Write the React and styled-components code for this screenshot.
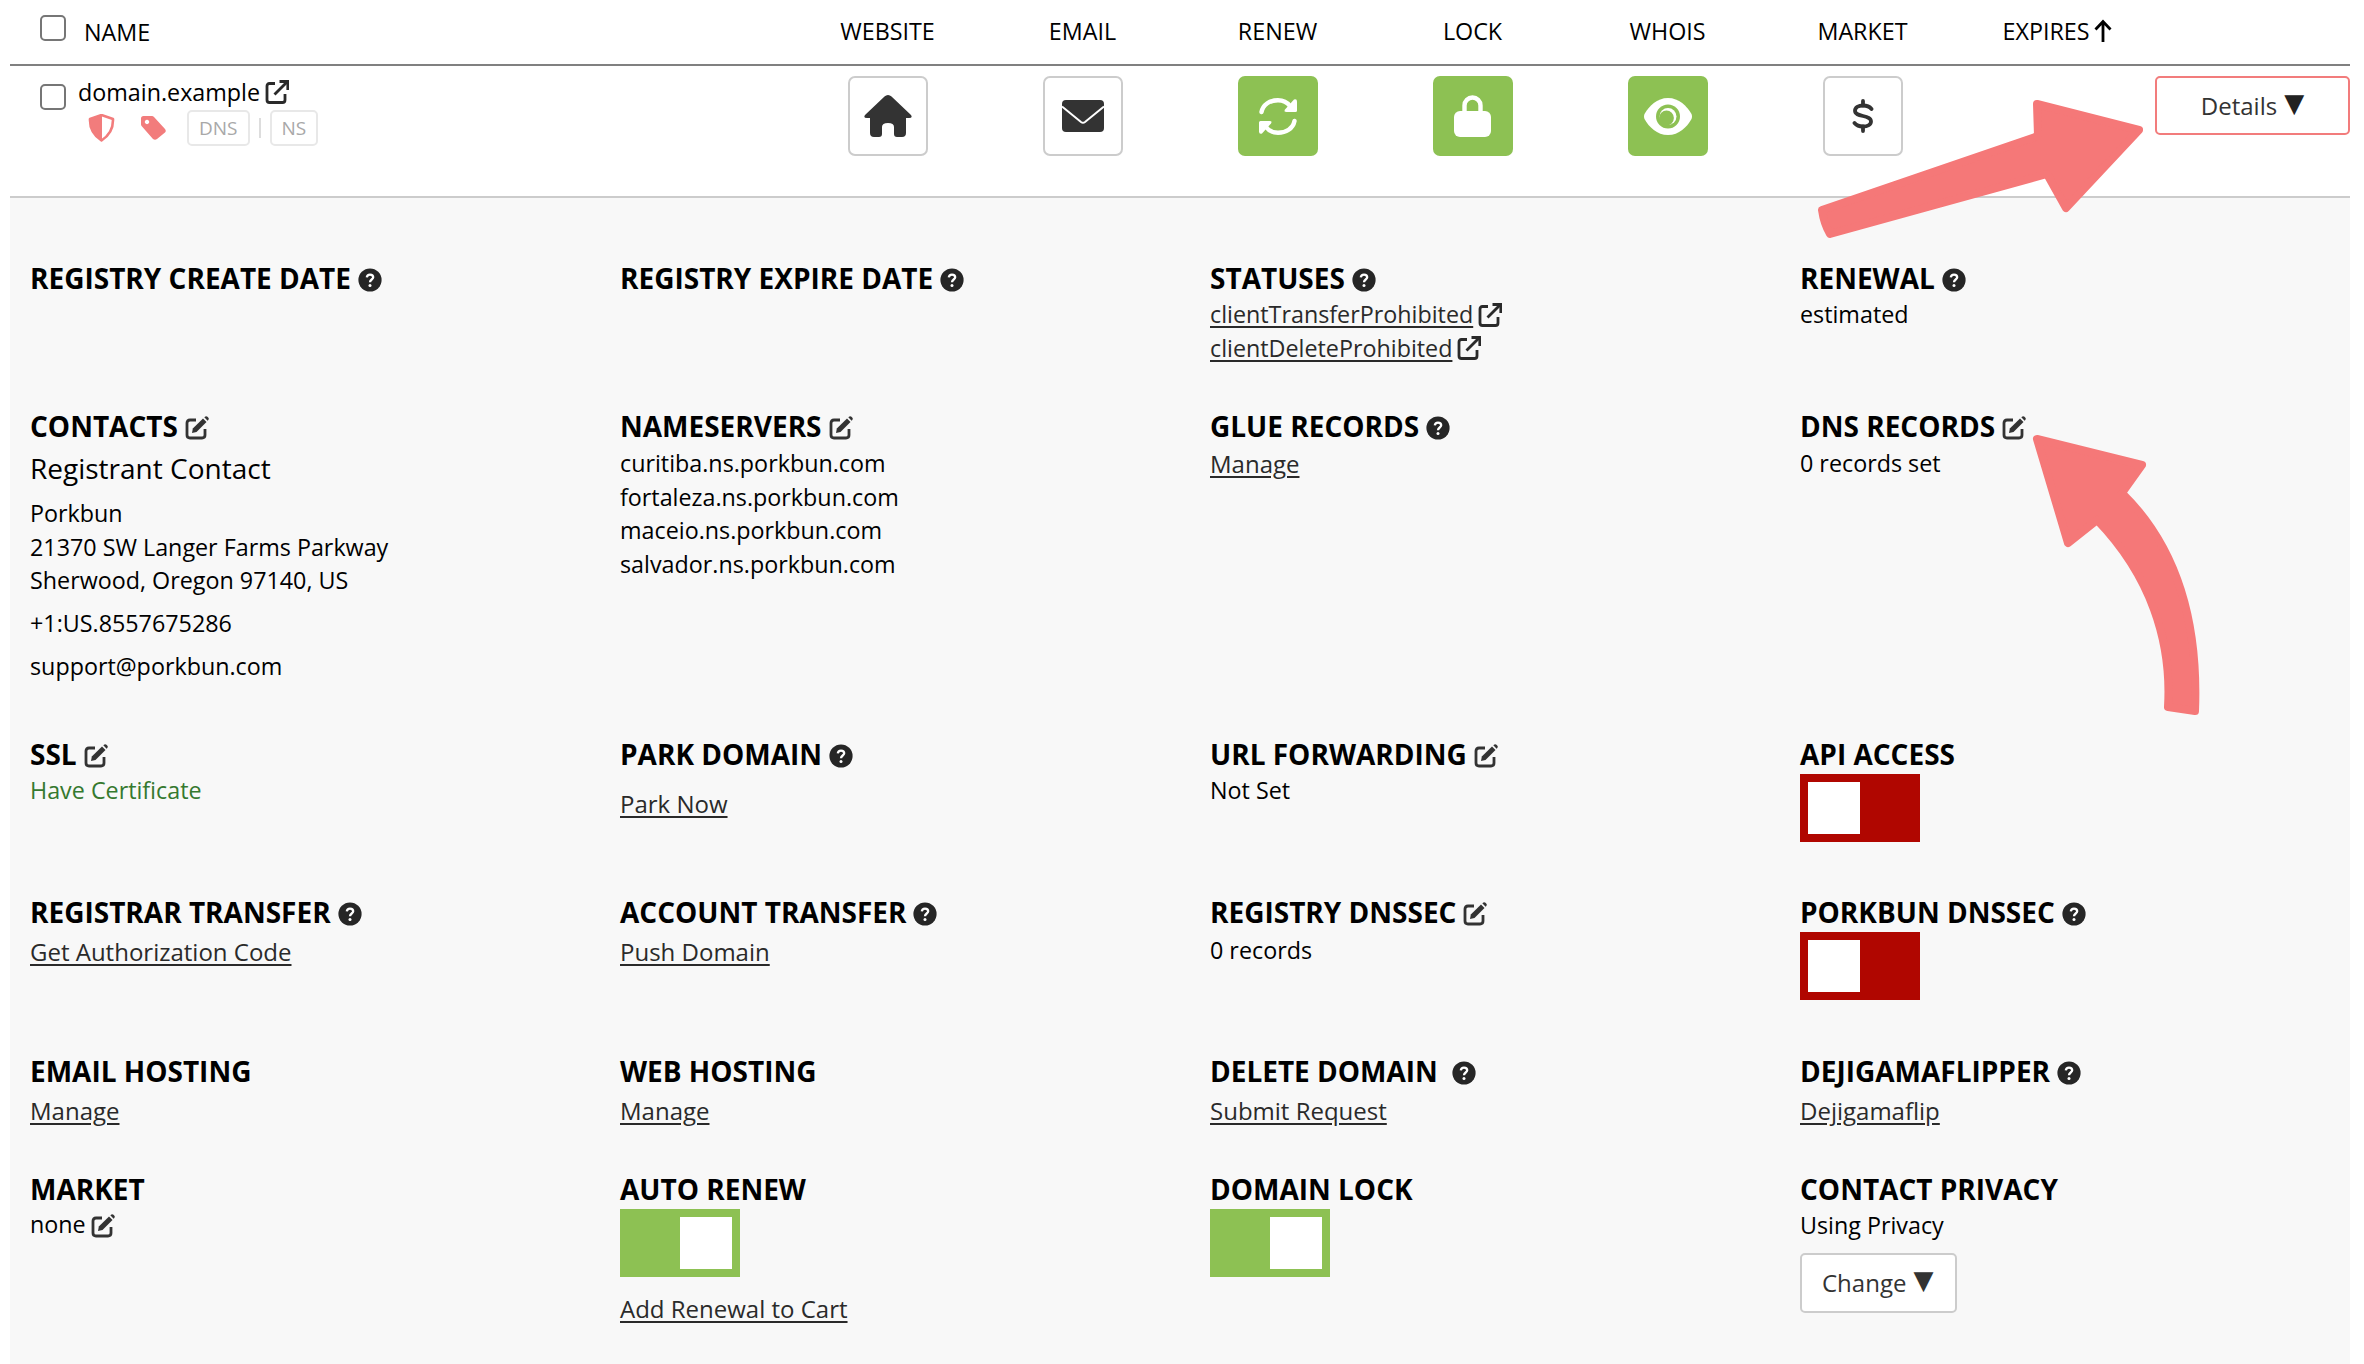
import React from "react";
import styled, { createGlobalStyle } from "styled-components";

const GlobalStyle = createGlobalStyle`
  html, body {
    margin: 0;
    padding: 0;
    background: #ffffff;
    overflow: hidden;
  }
  body {
    font-family: "Open Sans", "Liberation Sans", sans-serif;
    color: #000000;
  }
`;

const Page = styled.div`
  position: relative;
  width: 2364px;
  height: 1364px;
  padding: 0 14px 0 10px;
  box-sizing: border-box;
`;

const tableColumns = "780px repeat(8, 195px)";

const HeaderRow = styled.div`
  display: grid;
  grid-template-columns: ${tableColumns};
  height: 64px;
  border-bottom: 2px solid #808080;
  align-items: center;
  font-size: 23.3px;
`;

const NameHeader = styled.div`
  display: flex;
  align-items: flex-start;
  gap: 18px;
  padding-left: 30px;
  height: 64px;
  box-sizing: border-box;
  padding-top: 15px;

  span {
    line-height: 34px;
  }
`;

const Check = styled.span`
  display: block;
  width: 26px;
  height: 26px;
  flex: none;
  box-sizing: border-box;
  border: 2px solid #767676;
  border-radius: 5px;
  background: #ffffff;
`;

const HeadCell = styled.div`
  text-align: center;
  display: flex;
  justify-content: center;
  align-items: center;
  gap: 3px;
  margin-top: -2px;
`;

const DomainRow = styled.div`
  display: grid;
  grid-template-columns: ${tableColumns};
  border-bottom: 2px solid #cccccc;
  padding-top: 10px;
  box-sizing: border-box;
  height: 132px;
`;

const NameCell = styled.div`
  display: flex;
  gap: 12px;
  padding: 8px 0 0 30px;
`;

const NameStack = styled.div`
  display: flex;
  flex-direction: column;
`;

const DomainName = styled.div`
  display: flex;
  align-items: center;
  gap: 5px;
  font-size: 23.3px;
  line-height: 34px;
  margin-top: -9px;
`;

const Badges = styled.div`
  display: flex;
  align-items: center;
  margin: 1px 0 0 10px;
`;

const BadgeGap = styled.span`
  width: ${(p) => p.$w}px;
`;

const SmallTag = styled.span`
  display: inline-block;
  box-sizing: border-box;
  height: 36px;
  line-height: 32px;
  padding: 0 10px;
  border: 2px solid #e8e8e8;
  border-radius: 5px;
  font-size: 19px;
  color: #a8a8a8;
`;

const Separator = styled.span`
  width: 2px;
  height: 20px;
  margin: 0 9px;
  background: #dddddd;
`;

const IconCell = styled.div`
  display: flex;
  justify-content: center;
`;

const IconButton = styled.div`
  width: 80px;
  height: 80px;
  box-sizing: border-box;
  display: flex;
  align-items: center;
  justify-content: center;
  border-radius: 7px;
  border: ${(p) => (p.$on ? "none" : "2px solid #cccccc")};
  background: ${(p) => (p.$on ? "#8dc153" : "#ffffff")};
  color: ${(p) => (p.$on ? "#ffffff" : "#333333")};
`;

const DetailsButton = styled.div`
  height: 59px;
  box-sizing: border-box;
  border: 2px solid #f27c7c;
  border-radius: 5px;
  display: flex;
  align-items: center;
  justify-content: center;
  gap: 7px;
  font-size: 24px;
  color: #333333;
  background: #ffffff;
`;

const DetailGrid = styled.div`
  display: grid;
  grid-template-columns: repeat(4, 590px);
  grid-template-rows: 148px 328px 158px 159px 118px auto;
  height: 1166px;
  box-sizing: border-box;
  padding: 63px 0 0 20px;
  background: #f8f8f8;
  font-size: 23.3px;
  line-height: 33.5px;
`;

const Cell = styled.div`
  min-width: 0;
`;

const Heading = styled.div`
  display: flex;
  align-items: center;
  gap: ${(p) => p.$gap || 7}px;
  height: 36px;
  font-size: 28px;
  font-weight: 700;
  color: #000000;
  white-space: nowrap;
`;

const IconWrap = styled.span`
  display: inline-flex;
  margin-top: ${(p) => p.$dy || 0}px;
`;

const Value = styled.div`
  margin-top: ${(p) => p.$top || 0}px;
  color: ${(p) => p.$color || "#000000"};
  display: flex;
  align-items: center;
  gap: 5px;
`;

const StyledLink = styled.a`
  color: #2a2a2a;
  font-size: ${(p) => (p.$small ? "23.3px" : "24px")};
  text-decoration: underline;
  text-underline-offset: 3px;
`;

const RegistrantTitle = styled.div`
  font-size: 28px;
  line-height: 40px;
  margin-top: 3px;
`;

const ContactBlock = styled.div`
  margin-top: ${(p) => p.$top || 0}px;
`;

const Toggle = styled.div`
  width: 120px;
  height: 68px;
  box-sizing: border-box;
  padding: 8px;
  margin-top: 1px;
  display: flex;
  justify-content: ${(p) => (p.$on ? "flex-end" : "flex-start")};
  background: ${(p) => (p.$on ? "#8dc153" : "#b00600")};
`;

const Knob = styled.span`
  display: block;
  width: 52px;
  height: 52px;
  background: #ffffff;
`;

const ChangeButton = styled.div`
  display: inline-flex;
  align-items: center;
  gap: 7px;
  height: 60px;
  box-sizing: border-box;
  margin-top: 10px;
  padding: 0 20px;
  width: 157px;
  background: #ffffff;
  border: 2px solid #cccccc;
  border-radius: 5px;
  font-size: 24px;
  color: #333333;
`;

const Caret = styled.span`
  font-family: "DejaVu Sans", sans-serif;
  font-size: 26px;
  line-height: 1;
  color: ${(p) => p.$color || "#333333"};
  margin-top: -6px;
`;

const ArrowLayer = styled.svg`
  position: absolute;
  top: 0;
  left: 0;
  pointer-events: none;
`;

const Help = () => (
  <IconWrap $dy={2}>
    <svg width="24" height="24" viewBox="0 0 24 24">
      <circle cx="12" cy="12" r="11.6" fill="#262626" />
      <path d="M8.8 9.4C9 7.6 10.3 6.6 12 6.6C13.9 6.6 15.2 7.8 15.2 9.3C15.2 11.5 12 11.6 12 14.2" fill="none" stroke="#ffffff" strokeWidth="2.3" />
      <circle cx="12" cy="17.4" r="1.5" fill="#ffffff" />
    </svg>
  </IconWrap>
);

const Edit = () => (
  <IconWrap $dy={2}>
    <svg width="24" height="24" viewBox="0 0 24 24">
      <path d="M11 4H5Q2 4 2 7V19Q2 22 5 22H17Q20 22 20 19V13" fill="none" stroke="#333333" strokeWidth="2.8" />
      <path d="M7 17L7.8 12.5L18 2.5L21.5 6L11.5 16Z" fill="#333333" />
      <path d="M19.3 1.3L20.4 .4Q21.5 -.2 22.5 .8L23.4 1.8Q24.2 2.9 23.3 3.9L22.6 4.7Z" fill="#333333" />
    </svg>
  </IconWrap>
);

const External = () => (
  <IconWrap>
    <svg width="24" height="24" viewBox="0 0 24 24" fill="none" stroke="#2a2a2a" strokeWidth="2.8">
      <path d="M10 3.5H4.5Q2 3.5 2 6V20Q2 22.5 4.5 22.5H17.5Q20 22.5 20 20V14" />
      <path d="M9.5 14.5L21.5 2.5" />
      <path d="M14.5 1.5H22.8V10" />
    </svg>
  </IconWrap>
);

const HomeIcon = () => (
  <svg width="48" height="42" viewBox="0 0 48 42" fill="#333333">
    <path d="M24 0Q22 0 20.5 1.5L1 20Q-1 23 3 23L6 23L6 38Q6 42 10 42L15 42Q18 42 18 39L18 32Q18 28 24 28Q30 28 30 32L30 39Q30 42 33 42L38 42Q42 42 42 38L42 23L45 23Q49 23 47 20L27.5 1.5Q26 0 24 0Z" />
  </svg>
);

const MailIcon = () => (
  <svg width="42" height="32" viewBox="0 0 42 32">
    <rect width="42" height="32" rx="4" fill="#333333" />
    <path d="M0 6.5L19 22Q21 23.5 23 22L42 6.5" fill="none" stroke="#ffffff" strokeWidth="2" />
  </svg>
);

const SyncIcon = () => (
  <svg width="40" height="37" viewBox="0 0 40 37" fill="#ffffff">
    <path d="M3.5 14C5 6.5 12 2.2 20 2.2C25 2.2 29 4 32 8" fill="none" stroke="#ffffff" strokeWidth="4.4" strokeLinecap="round" />
    <path d="M36 1.5Q39 .5 39 3.5V12.5Q39 14 37.5 14H28.5Q25.5 14 27 11.5Z" />
    <path d="M36.5 23C35 30.5 28 34.8 20 34.8C15 34.8 11 33 8 29" fill="none" stroke="#ffffff" strokeWidth="4.4" strokeLinecap="round" />
    <path d="M4 35.5Q1 36.5 1 33.5V24.5Q1 23 2.5 23H11.5Q14.5 23 13 25.5Z" />
  </svg>
);

const LockIcon = () => (
  <svg width="37" height="42" viewBox="0 0 37 42" fill="#ffffff">
    <path d="M10.5 18V10.5a8 8 0 0 1 16 0V18" fill="none" stroke="#ffffff" strokeWidth="4.4" />
    <rect y="16" width="37" height="26" rx="6" />
  </svg>
);

const EyeIcon = () => (
  <svg width="48" height="37" viewBox="0 0 48 37">
    <path d="M24 0C35 0 43 8 47.5 16Q48.5 18.5 47.5 21C43 29 35 37 24 37C13 37 5 29 .5 21Q-.5 18.5 .5 16C5 8 13 0 24 0Z" fill="#ffffff" />
    <circle cx="24" cy="18.5" r="12" fill="#8dc153" />
    <circle cx="24" cy="18.5" r="8.5" fill="#ffffff" />
    <circle cx="22.5" cy="20" r="7.4" fill="#8dc153" />
  </svg>
);

const DollarIcon = () => (
  <svg width="22" height="34" viewBox="0 0 22 34" fill="none" stroke="#333333" strokeWidth="3.8" strokeLinecap="round">
    <path d="M19.5 10C17.5 7.5 14.5 6.5 11 6.5C6.5 6.5 3 8.5 3 11.8C3 15 6.5 16 11 17C15.5 18 19 19 19 22.5C19 25.5 15.5 27.5 11 27.5C7.5 27.5 4.5 26.5 2.5 24" />
    <path d="M11 2V6.5M11 27.5V32" />
  </svg>
);

const ShieldIcon = () => (
  <svg width="27" height="28" viewBox="0 0 27 28">
    <path d="M13.5 1L25 5Q25.5 19 13.5 26.5Q1.5 19 2 5Z" fill="none" stroke="#f27c7c" strokeWidth="2.6" strokeLinejoin="round" />
    <path d="M13.5 1L2 5Q1.5 19 13.5 26.5Z" fill="#f27c7c" stroke="#f27c7c" strokeWidth="1" strokeLinejoin="round" />
  </svg>
);

const TagIcon = () => (
  <svg width="25" height="24" viewBox="0 0 25 24">
    <path
      fillRule="evenodd"
      fill="#f27c7c"
      d="M2.5 0L11 0Q12 0 13 1L24 13Q25.5 15 24 16.5L16 23Q14 24.5 12 23L1 10.5Q0 9.5 0 8.5L0 2.5Q0 0 2.5 0ZM6 3.8a2.2 2.2 0 1 0 .01 0Z"
    />
  </svg>
);

const headers = ["WEBSITE", "EMAIL", "RENEW", "LOCK", "WHOIS", "MARKET"];

export default function App() {
  return (
    <Page>
      <GlobalStyle />
      <HeaderRow>
        <NameHeader>
          <Check />
          <span>NAME</span>
        </NameHeader>
        {headers.map((h) => (
          <HeadCell key={h}>{h}</HeadCell>
        ))}
        <HeadCell>
          EXPIRES
          <svg width="20" height="24" viewBox="0 0 20 24" fill="none" stroke="#000000" strokeWidth="2.8">
            <path d="M10 23V3M2.5 10.5L10 2.5L17.5 10.5" />
          </svg>
        </HeadCell>
        <div />
      </HeaderRow>

      <DomainRow>
        <NameCell>
          <Check />
          <NameStack>
            <DomainName>
              domain.example <External />
            </DomainName>
            <Badges>
              <ShieldIcon />
              <BadgeGap $w={26} />
              <TagIcon />
              <BadgeGap $w={21} />
              <SmallTag>DNS</SmallTag>
              <Separator />
              <SmallTag>NS</SmallTag>
            </Badges>
          </NameStack>
        </NameCell>
        <IconCell>
          <IconButton>
            <HomeIcon />
          </IconButton>
        </IconCell>
        <IconCell>
          <IconButton>
            <MailIcon />
          </IconButton>
        </IconCell>
        <IconCell>
          <IconButton $on>
            <SyncIcon />
          </IconButton>
        </IconCell>
        <IconCell>
          <IconButton $on>
            <LockIcon />
          </IconButton>
        </IconCell>
        <IconCell>
          <IconButton $on>
            <EyeIcon />
          </IconButton>
        </IconCell>
        <IconCell>
          <IconButton>
            <DollarIcon />
          </IconButton>
        </IconCell>
        <div />
        <DetailsButton>
          Details <Caret $color="#222222">▼</Caret>
        </DetailsButton>
      </DomainRow>

      <DetailGrid>
        <Cell>
          <Heading>REGISTRY CREATE DATE <Help /></Heading>
        </Cell>
        <Cell>
          <Heading>REGISTRY EXPIRE DATE <Help /></Heading>
        </Cell>
        <Cell>
          <Heading>STATUSES <Help /></Heading>
          <Value $top={1}>
            <StyledLink $small>clientTransferProhibited</StyledLink> <External />
          </Value>
          <Value>
            <StyledLink $small>clientDeleteProhibited</StyledLink> <External />
          </Value>
        </Cell>
        <Cell>
          <Heading>RENEWAL <Help /></Heading>
          <Value $top={1}>estimated</Value>
        </Cell>

        <Cell>
          <Heading>CONTACTS <Edit /></Heading>
          <RegistrantTitle>Registrant Contact</RegistrantTitle>
          <ContactBlock $top={9}>
            Porkbun
            <br />
            21370 SW Langer Farms Parkway
            <br />
            Sherwood, Oregon 97140, US
          </ContactBlock>
          <ContactBlock $top={9}>+1:US.8557675286</ContactBlock>
          <ContactBlock $top={10}>support@porkbun.com</ContactBlock>
        </Cell>
        <Cell>
          <Heading>NAMESERVERS <Edit /></Heading>
          <ContactBlock $top={2}>
            curitiba.ns.porkbun.com
            <br />
            fortaleza.ns.porkbun.com
            <br />
            maceio.ns.porkbun.com
            <br />
            salvador.ns.porkbun.com
          </ContactBlock>
        </Cell>
        <Cell>
          <Heading>GLUE RECORDS <Help /></Heading>
          <Value $top={2}>
            <StyledLink>Manage</StyledLink>
          </Value>
        </Cell>
        <Cell>
          <Heading>DNS RECORDS <Edit /></Heading>
          <Value $top={2}>0 records set</Value>
        </Cell>

        <Cell>
          <Heading>SSL <Edit /></Heading>
          <Value $top={1} $color="#35792f">Have Certificate</Value>
        </Cell>
        <Cell>
          <Heading>PARK DOMAIN <Help /></Heading>
          <Value $top={14}>
            <StyledLink>Park Now</StyledLink>
          </Value>
        </Cell>
        <Cell>
          <Heading>URL FORWARDING <Edit /></Heading>
          <Value $top={1}>Not Set</Value>
        </Cell>
        <Cell>
          <Heading>API ACCESS</Heading>
          <Toggle>
            <Knob />
          </Toggle>
        </Cell>

        <Cell>
          <Heading>REGISTRAR TRANSFER <Help /></Heading>
          <Value $top={4}>
            <StyledLink>Get Authorization Code</StyledLink>
          </Value>
        </Cell>
        <Cell>
          <Heading>ACCOUNT TRANSFER <Help /></Heading>
          <Value $top={4}>
            <StyledLink>Push Domain</StyledLink>
          </Value>
        </Cell>
        <Cell>
          <Heading>REGISTRY DNSSEC <Edit /></Heading>
          <Value $top={3}>0 records</Value>
        </Cell>
        <Cell>
          <Heading>PORKBUN DNSSEC <Help /></Heading>
          <Toggle>
            <Knob />
          </Toggle>
        </Cell>

        <Cell>
          <Heading>EMAIL HOSTING</Heading>
          <Value $top={4}>
            <StyledLink>Manage</StyledLink>
          </Value>
        </Cell>
        <Cell>
          <Heading>WEB HOSTING</Heading>
          <Value $top={4}>
            <StyledLink>Manage</StyledLink>
          </Value>
        </Cell>
        <Cell>
          <Heading $gap={14}>DELETE DOMAIN <Help /></Heading>
          <Value $top={4}>
            <StyledLink>Submit Request</StyledLink>
          </Value>
        </Cell>
        <Cell>
          <Heading>DEJIGAMAFLIPPER <Help /></Heading>
          <Value $top={4}>
            <StyledLink>Dejigamaflip</StyledLink>
          </Value>
        </Cell>

        <Cell>
          <Heading>MARKET</Heading>
          <Value>
            none <Edit />
          </Value>
        </Cell>
        <Cell>
          <Heading>AUTO RENEW</Heading>
          <Toggle $on>
            <Knob />
          </Toggle>
          <Value $top={15}>
            <StyledLink>Add Renewal to Cart</StyledLink>
          </Value>
        </Cell>
        <Cell>
          <Heading>DOMAIN LOCK</Heading>
          <Toggle $on>
            <Knob />
          </Toggle>
        </Cell>
        <Cell>
          <Heading>CONTACT PRIVACY</Heading>
          <Value $top={1}>Using Privacy</Value>
          <ChangeButton>
            Change <Caret>▼</Caret>
          </ChangeButton>
        </Cell>
      </DetailGrid>

      <ArrowLayer width="2364" height="1364" viewBox="0 0 2364 1364">
        <g fill="#f57878" stroke="#f57878" strokeWidth="8" strokeLinejoin="round">
          <path d="M1822 210L2038 136L2037 104L2139 130L2066 208L2047 174L1830 234Q1824 224 1822 210Z" />
          <path d="M2037 439L2142 465L2122 493C2170 540 2199 610 2195 711L2168 707C2172 640 2150 575 2097 520L2068 543Z" />
        </g>
      </ArrowLayer>
    </Page>
  );
}
